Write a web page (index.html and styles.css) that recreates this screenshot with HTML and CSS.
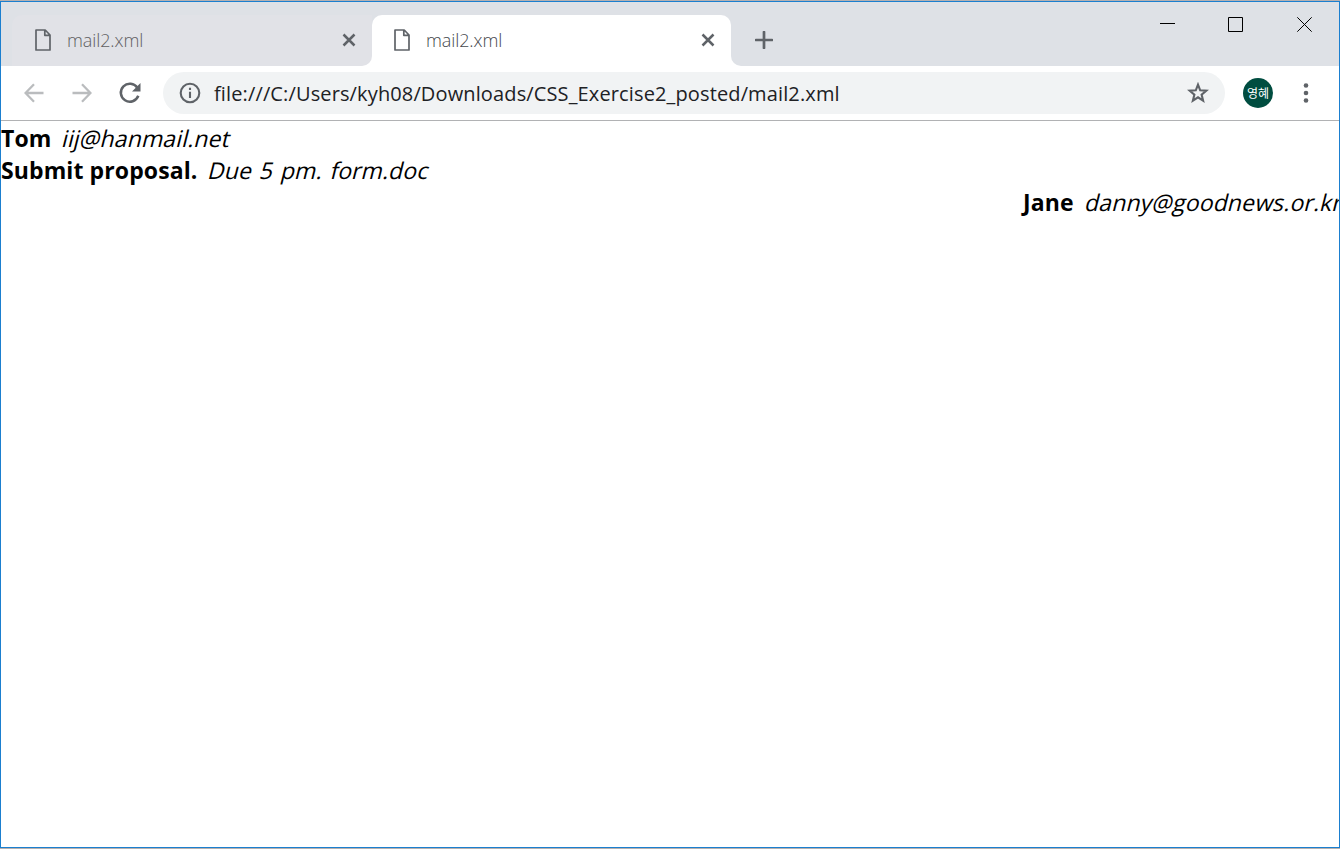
FILE: index.html
```html
<!DOCTYPE html>
<html lang="ko">
<head>
<meta charset="utf-8">
<title>mail2.xml</title>
<link rel="stylesheet" href="styles.css">
</head>
<body>
<div class="window">
  <header class="tabstrip">
    <div class="tab tab-idle">
      <svg class="file" width="18" height="24" viewBox="0 0 18 24"><path d="M2 2H11.200L16 7V22H2ZM10.800 2V7.300H16"/></svg>
      <span class="tab-title">mail2.xml</span>
      <svg class="close" width="14" height="14" viewBox="0 0 14 14"><path d="M1.500 1.500L12.500 12.500M12.500 1.500L1.500 12.500"/></svg>
    </div>
    <div class="tab tab-active">
      <svg class="file" width="18" height="24" viewBox="0 0 18 24"><path d="M2 2H11.200L16 7V22H2ZM10.800 2V7.300H16"/></svg>
      <span class="tab-title">mail2.xml</span>
      <svg class="close" width="14" height="14" viewBox="0 0 14 14"><path d="M1.500 1.500L12.500 12.500M12.500 1.500L1.500 12.500"/></svg>
    </div>
    <div class="tab-rest">
      <svg class="plus" width="18" height="18" viewBox="0 0 18 18"><path d="M9 1V17M1 9H17"/></svg>
      <div class="controls">
        <svg width="15" height="15" viewBox="0 0 15 15"><path d="M0 6.500H15"/></svg>
        <svg width="15" height="15" viewBox="0 0 15 15"><path d="M.5 .5H14.500V14.500H.5Z"/></svg>
        <svg width="15" height="15" viewBox="0 0 15 15"><path d="M.3 .3L14.700 14.700M14.700 .3L.3 14.700"/></svg>
      </div>
    </div>
  </header>
  <nav class="toolbar">
    <svg class="arrow" width="20" height="20" viewBox="0 0 20 20"><path d="M19.500 10H1.800M10 1.200L1.500 10L10 18.800"/></svg>
    <svg class="arrow forward" width="20" height="20" viewBox="0 0 20 20"><path d="M.5 10H18.200M10 1.200L18.500 10L10 18.800"/></svg>
    <svg class="reload" width="22" height="22" viewBox="0 0 22 22"><path class="arc" d="M18.400 5.800A9 9 0 1 0 19.300 13.800"/><path class="tip" d="M21.500 1V9.500H13Z"/></svg>
    <div class="omnibox">
      <svg class="info" width="22" height="22" viewBox="0 0 22 22"><circle cx="11" cy="11" r="9.300"/><path d="M11 5.700V8M11 9.800V16"/></svg>
      <span class="url">file:///C:/Users/kyh08/Downloads/CSS_Exercise2_posted/mail2.xml</span>
      <svg class="star" width="22" height="22" viewBox="0 0 22 22"><path d="M11 2.600L13.200 8.300L19.300 8.700L14.600 12.600L16.100 18.600L11 15.300L5.900 18.600L7.400 12.600L2.700 8.700L8.800 8.300Z"/></svg>
    </div>
    <div class="avatar">영혜</div>
    <svg class="menu" width="6" height="20" viewBox="0 0 6 20"><circle cx="3" cy="2.500" r="2.300"/><circle cx="3" cy="10" r="2.300"/><circle cx="3" cy="17.500" r="2.300"/></svg>
  </nav>
  <main class="page">
    <div class="line"><b class="from">Tom</b><span class="slant mail">iij@hanmail.net</span></div>
    <div class="line"><b class="subject">Submit proposal.</b><span class="slant note">Due 5 pm. form.doc</span></div>
    <div class="line reply"><b class="jane">Jane</b><span class="slant danny">danny@goodnews.or.kr</span></div>
  </main>
</div>
</body>
</html>
```
FILE: styles.css
```css
* { box-sizing: border-box; }
body { margin: 0; background: #b5b0b0; font-family: "Open Sans", "Noto Sans", "Noto Sans CJK KR", sans-serif; }
svg { flex: none; fill: none; display: block; }
.window { height: 847px; margin: 1px 0; border: 1px solid #1b7fcf; background: #fff; display: flex; flex-direction: column; overflow: hidden; }
/* The white foot shows through the rounded corners beside the active tab. */
.tabstrip { height: 64px; padding-left: 11px; display: flex; align-items: flex-end; background: linear-gradient(#dee1e6 44px, #fff 44px); border-left: 0; flex: none; }
.tabstrip { background: linear-gradient(#fff, #fff) 340px 100% / 410px 20px no-repeat #dee1e6; }
.tab { display: flex; align-items: center; height: 51px; width: 360px; padding: 0 16px 2px 22px; flex: none; }
.tab-idle { background: #e1e2e7; border-radius: 10px 0 10px 0; }
.tab-active { width: 359px; background: #fff; border-radius: 10px 10px 0 0; padding-left: 21px; }
.file { margin-top: 1px; }
.file path { stroke: #5f6368; stroke-width: 1.7; stroke-linejoin: round; }
.tab-title { font-size: 18px; line-height: 24px; color: #5f6062; margin-left: 15px; flex: 1; white-space: nowrap; font-weight: 300; letter-spacing: -.1px; }
.tab-active .tab-title { color: #45484c; }
.close path { stroke: #5f6368; stroke-width: 2.5; }
.plus path { stroke: #5f6368; stroke-width: 2.7; stroke-linecap: round; }
.tab-rest { flex: 1; height: 64px; display: flex; justify-content: space-between; padding: 29px 27px 0 24px; background: #dee1e6; border-bottom-left-radius: 10px; }
.controls { display: flex; gap: 54px; margin-top: -14px; }
.controls svg:first-child { margin-right: -1px; }
.controls path { stroke: #000; stroke-width: 1; }
.toolbar { height: 55px; flex: none; border-bottom: 1px solid #b1b2b4; display: flex; align-items: center; padding: 0 30px 0 23px; background: #fff; }
.arrow path { stroke: #babcbe; stroke-width: 2.3; }
.forward { margin-left: 28px; }
.reload { margin-left: 27px; }
.arc { stroke: #5f6368; stroke-width: 2.5; }
.tip { fill: #5f6368; }
.omnibox { width: 1062px; height: 42px; border-radius: 21px; background: #f1f3f4; margin-left: 22px; padding: 0 16px; display: flex; align-items: center; flex: none; }
.info circle, .info path { stroke: #5f6368; stroke-width: 2.1; }
.url { flex: 1; margin-left: 13px; padding-top: 1px; font-size: 20px; line-height: 28px; letter-spacing: .13px; color: #202124; white-space: nowrap; }
.star path { stroke: #5f6368; stroke-width: 2.1; }
.avatar { width: 30px; height: 30px; margin-left: 18px; border-radius: 50%; background: #004d40; color: #fff; display: flex; align-items: center; justify-content: center; font: 12px/30px "Noto Sans CJK KR", sans-serif; white-space: nowrap; flex: none; }
.menu { margin-left: 30px; }
.menu circle { fill: #5f6368; }
.page { flex: 1; padding-top: 1px; font-size: 23px; line-height: 32px; color: #000; }
.line { display: flex; height: 32px; white-space: nowrap; }
.line b { letter-spacing: .1px; }
.from { width: 50px; }
.subject { width: 196px; }
.slant { transform: skewX(-14deg); transform-origin: 0 24px; }
.mail { margin-left: 10px; letter-spacing: .13px; }
.note { margin-left: 10px; word-spacing: 1.8px; letter-spacing: .08px; }
.reply { padding-left: 1022px; }
.jane { width: 51px; }
.danny { margin-left: 10px; letter-spacing: .14px; }
```
